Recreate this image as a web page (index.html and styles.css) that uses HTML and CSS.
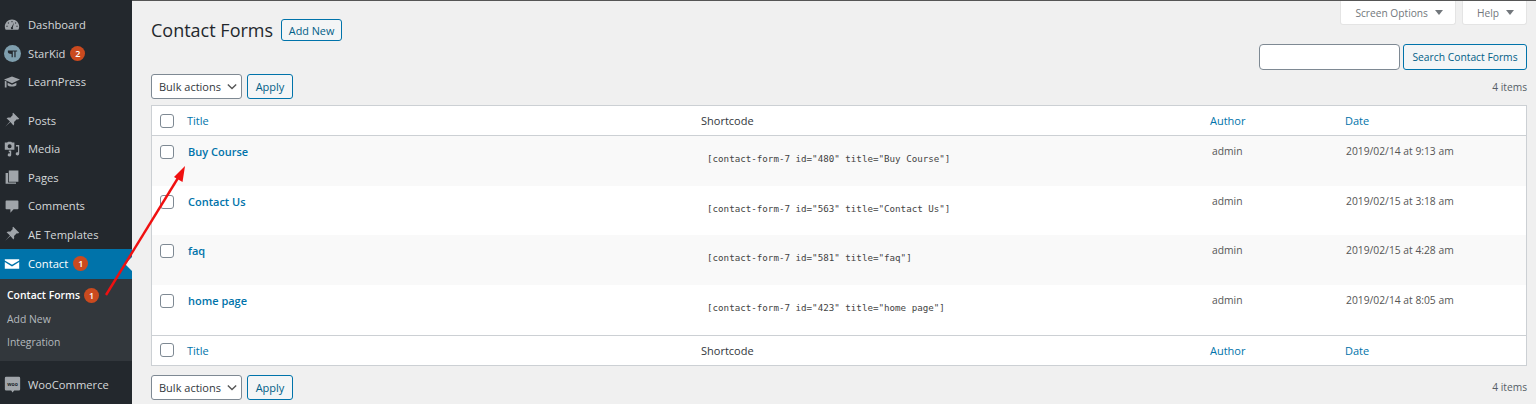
FILE: index.html
```html
<!DOCTYPE html>
<html lang="en">
<head>
  <meta charset="UTF-8">
  <title>Contact Forms</title>
  <link rel="stylesheet" href="styles.css">
</head>
<body>
  <!-- Admin sidebar -->
  <nav class="sidebar">
    <ul class="menu">
      <li class="menu-item">
        <svg class="menu-icon" viewBox="0 0 20 20"><path fill-rule="evenodd" d="M10 3C5 3 1 7 1 12c0 1.600.4 3 1.100 4h15.800c.7-1 1.100-2.400 1.100-4 0-5-4-9-9-9zM5.500 6.500l1 1-1 1-1-1zM9.400 5h1.200v1.500H9.400zM14.500 6.500l1 1-1 1-1-1zM3 11h1.500v1.200H3zM15.500 11H17v1.200h-1.500zM12.500 7l-1.500 6a1.400 1.400 0 1 1-1.400-.4z"/></svg>
        <span>Dashboard</span>
      </li>
      <li class="menu-item">
        <svg class="menu-icon menu-icon-logo" viewBox="0 0 22 22"><circle cx="11" cy="11" r="11" fill="#7f9fae"/><path d="M5 7h12v1.500h-2V16h-1.600V8.500h-2V16H9.800v-4.500C7 11.500 5 10.500 5 9z" fill="#23282d"/></svg>
        <span>StarKid</span>
        <span class="count">2</span>
      </li>
      <li class="menu-item">
        <svg class="menu-icon" viewBox="0 0 20 20"><path d="M10 3L0 7l10 4.500L20 7zM4.500 11v3c1.500 2.300 9.500 2.300 11 0v-3L10 13.500zM1 8.500V17h2.200V9.500z"/></svg>
        <span>LearnPress</span>
      </li>
      <li class="menu-item menu-gap">
        <svg class="menu-icon" viewBox="0 0 20 20"><path d="M11.500 1L19 8.500l-1.500 1-1.500-.5-3.500 3.500c.5 2 .2 3.300-.7 4.500L8 12.500 1.500 18.500 7.500 12 3.200 7.800c1.200-.9 2.500-1.200 4.500-.7L11 3.800l-.5-1.500z"/></svg>
        <span>Posts</span>
      </li>
      <li class="menu-item">
        <svg class="menu-icon" viewBox="0 0 20 20"><path fill-rule="evenodd" d="M1 2h3l1-1h4l1 1h3v9H1zM7 4a2.500 2.500 0 1 0 0 5 2.500 2.500 0 0 0 0-5zM15 5h4v11a2.200 2 0 1 1-1.500-1.900V7H15zM6 12h3v5.500A2.200 2 0 1 1 7.500 15.600V14H6z"/></svg>
        <span>Media</span>
      </li>
      <li class="menu-item">
        <svg class="menu-icon" viewBox="0 0 20 20"><path d="M6 2h12v14H6zM2 5h3v12h10v1.500H2z"/></svg>
        <span>Pages</span>
      </li>
      <li class="menu-item">
        <svg class="menu-icon" viewBox="0 0 20 20"><path d="M3 3h14a1 1 0 0 1 1 1v9a1 1 0 0 1-1 1h-5l-4 4.500V14H3a1 1 0 0 1-1-1V4a1 1 0 0 1 1-1z"/></svg>
        <span>Comments</span>
      </li>
      <li class="menu-item">
        <svg class="menu-icon" viewBox="0 0 20 20"><path d="M11.500 1L19 8.500l-1.500 1-1.500-.5-3.500 3.500c.5 2 .2 3.300-.7 4.500L8 12.500 1.500 18.500 7.500 12 3.200 7.800c1.200-.9 2.500-1.200 4.500-.7L11 3.800l-.5-1.500z"/></svg>
        <span>AE Templates</span>
      </li>
      <li class="menu-item menu-current">
        <svg class="menu-icon" viewBox="0 0 20 20"><path d="M1 4h18v1.500l-9 5.500-9-5.500zM1 7.500l9 5.500 9-5.500V16H1z"/></svg>
        <span>Contact</span>
        <span class="count">1</span>
      </li>
    </ul>
    <ul class="submenu">
      <li class="submenu-item submenu-current">
        <span>Contact Forms</span>
        <span class="count">1</span>
      </li>
      <li class="submenu-item">Add New</li>
      <li class="submenu-item">Integration</li>
    </ul>
    <ul class="menu menu-bottom">
      <li class="menu-item">
        <svg class="menu-icon menu-icon-woo" viewBox="0 0 20 20"><path d="M2.500 1h15A1.500 1.500 0 0 1 19 2.500v13a1.500 1.500 0 0 1-1.500 1.500H12l-2 2.500L8.500 17h-6A1.500 1.500 0 0 1 1 15.500v-13A1.500 1.500 0 0 1 2.500 1z"/><text class="woo-text" x="10" y="11.500">woo</text></svg>
        <span>WooCommerce</span>
      </li>
    </ul>
  </nav>

  <main class="content">
    <div class="top-area">
      <div class="title-row">
        <h1>Contact Forms</h1>
        <button class="btn btn-add">Add New</button>
      </div>
      <div class="top-right">
        <div class="tabs">
          <div class="tab">Screen Options <i class="tab-arrow"></i></div>
          <div class="tab">Help <i class="tab-arrow"></i></div>
        </div>
        <div class="search">
          <input class="search-input" type="text">
          <button class="btn">Search Contact Forms</button>
        </div>
      </div>
    </div>

    <div class="tablenav">
      <div class="select">Bulk actions
        <svg class="chevron" viewBox="0 0 12 8"><path d="M1 1.500l5 5 5-5" fill="none" stroke="#555" stroke-width="1.600"/></svg>
      </div>
      <button class="btn">Apply</button>
      <div class="items">4 items</div>
    </div>

    <table class="forms">
      <thead>
        <tr>
          <th class="col-check"><span class="checkbox"></span></th>
          <th class="col-title"><a>Title</a></th>
          <th class="col-code">Shortcode</th>
          <th class="col-author"><a>Author</a></th>
          <th class="col-date"><a>Date</a></th>
        </tr>
      </thead>
      <tbody>
        <tr class="alt">
          <td class="col-check"><span class="checkbox"></span></td>
          <td class="col-title"><a class="row-title">Buy Course</a></td>
          <td class="col-code"><code>[contact-form-7 id="480" title="Buy Course"]</code></td>
          <td class="col-author">admin</td>
          <td class="col-date">2019/02/14 at 9:13 am</td>
        </tr>
        <tr>
          <td class="col-check"><span class="checkbox"></span></td>
          <td class="col-title"><a class="row-title">Contact Us</a></td>
          <td class="col-code"><code>[contact-form-7 id="563" title="Contact Us"]</code></td>
          <td class="col-author">admin</td>
          <td class="col-date">2019/02/15 at 3:18 am</td>
        </tr>
        <tr class="alt">
          <td class="col-check"><span class="checkbox"></span></td>
          <td class="col-title"><a class="row-title">faq</a></td>
          <td class="col-code"><code>[contact-form-7 id="581" title="faq"]</code></td>
          <td class="col-author">admin</td>
          <td class="col-date">2019/02/15 at 4:28 am</td>
        </tr>
        <tr>
          <td class="col-check"><span class="checkbox"></span></td>
          <td class="col-title"><a class="row-title">home page</a></td>
          <td class="col-code"><code>[contact-form-7 id="423" title="home page"]</code></td>
          <td class="col-author">admin</td>
          <td class="col-date">2019/02/14 at 8:05 am</td>
        </tr>
      </tbody>
      <tfoot>
        <tr>
          <th class="col-check"><span class="checkbox"></span></th>
          <th class="col-title"><a>Title</a></th>
          <th class="col-code">Shortcode</th>
          <th class="col-author"><a>Author</a></th>
          <th class="col-date"><a>Date</a></th>
        </tr>
      </tfoot>
    </table>

    <div class="tablenav tablenav-bottom">
      <div class="select">Bulk actions
        <svg class="chevron" viewBox="0 0 12 8"><path d="M1 1.500l5 5 5-5" fill="none" stroke="#555" stroke-width="1.600"/></svg>
      </div>
      <button class="btn">Apply</button>
      <div class="items">4 items</div>
    </div>
  </main>

  <!-- Red annotation arrow drawn over the screenshot -->
  <svg class="arrow" viewBox="0 0 1536 404">
    <path d="M106 295L178 178" fill="none" stroke="#f01010" stroke-width="2.400"/>
    <path d="M185 166L182.500 182L174 177z" fill="#f01010"/>
  </svg>
</body>
</html>
```

FILE: styles.css
```css
* {
  box-sizing: border-box;
}

html, body {
  margin: 0;
  padding: 0;
  height: 404px;
  overflow: hidden;
}

body {
  display: flex;
  font-family: "Open Sans", sans-serif;
  font-size: 11px;
  color: #444;
  background-color: #f0f0f0;
}

ul {
  list-style: none;
  margin: 0;
  padding: 0;
}

/* sidebar */
.sidebar {
  width: 132px;
  flex-shrink: 0;
  padding-top: 10.500px;
  background-color: #23282d;
  color: #d5d8da;
  font-size: 11.200px;
}

.menu-item {
  display: flex;
  align-items: center;
  height: 28.500px;
  padding-left: 4px;
  gap: 8px;
  white-space: nowrap;
}

.menu-gap {
  margin-top: 10px;
}

.menu-icon {
  width: 16px;
  height: 16px;
  flex-shrink: 0;
  fill: #a0a5aa;
}

.menu-icon-logo {
  width: 17px;
  height: 17px;
  margin-right: -1px;
}

.menu-icon-woo {
  width: 17px;
  height: 17px;
  margin-right: -1px;
}

.woo-text {
  fill: #23282d;
  font-size: 6px;
  font-weight: 700;
  text-anchor: middle;
}

.menu-current {
  height: 30px;
  background-color: #0073aa;
  color: #fff;
  position: relative;
}

.menu-current .menu-icon {
  fill: #fff;
}

.menu-current::after {
  content: "";
  position: absolute;
  right: 0;
  top: 8px;
  border: 7px solid transparent;
  border-right-color: #f0f0f0;
}

.count {
  display: inline-flex;
  align-items: center;
  justify-content: center;
  width: 15px;
  height: 15px;
  margin-left: -3px;
  border-radius: 50%;
  background-color: #ca4a1f;
  color: #fff;
  font-size: 9px;
  font-weight: 600;
}

.submenu {
  height: 82px;
  padding-top: 5px;
  background-color: #32373c;
  color: #b4b9be;
  font-size: 10.400px;
}

.submenu-item {
  display: flex;
  align-items: center;
  height: 23.500px;
  padding-left: 7px;
  gap: 7px;
}

.submenu-current {
  color: #fff;
  font-weight: 600;
}

.menu-bottom {
  padding-top: 10px;
}

/* main column */
.content {
  flex: 1;
  min-width: 0;
  padding: 0 9px 0 19px;
  border-top: 1px solid #555;
}

.top-area {
  display: flex;
  justify-content: space-between;
  height: 69px;
}

.title-row {
  display: flex;
  align-items: center;
  gap: 7px;
  height: 22px;
  margin-top: 18px;
}

h1 {
  margin: 0;
  font-size: 18px;
  font-weight: 400;
  color: #23282d;
}

.btn {
  height: 25px;
  padding: 0 6px;
  border: 1px solid #0073aa;
  border-radius: 3px;
  background-color: #f3f5f6;
  color: #016087;
  font-family: inherit;
  font-size: 10.800px;
}

.btn-add {
  width: 61px;
  height: 22px;
  padding: 0;
  margin-left: 1px;
}

.top-right {
  display: flex;
  flex-direction: column;
  align-items: flex-end;
}

.tabs {
  display: flex;
  gap: 6px;
  height: 24px;
}

.tab {
  display: flex;
  align-items: center;
  gap: 7px;
  padding: 0 12px 0 14px;
  border: 1px solid #e4e4e4;
  border-top: none;
  border-radius: 0 0 3px 3px;
  background-color: #fff;
  color: #72777c;
  font-size: 10.200px;
}

.tab-arrow {
  width: 0;
  height: 0;
  border: 4px solid transparent;
  border-top: 5px solid #72777c;
  border-bottom: none;
}

.search {
  display: flex;
  gap: 3px;
  margin-top: 19px;
}

.search-input {
  width: 141px;
  height: 26px;
  border: 1px solid #7e8993;
  border-radius: 4px;
  background-color: #fff;
}

.search .btn {
  width: 124px;
  height: 26px;
  padding: 0;
  font-size: 10.300px;
}

.tablenav {
  display: flex;
  align-items: center;
  gap: 5px;
  height: 25px;
  margin-top: 4px;
}

.tablenav-bottom {
  margin-top: 9px;
}

.select {
  display: flex;
  align-items: center;
  justify-content: space-between;
  width: 91px;
  height: 25px;
  padding: 0 4px 0 7px;
  border: 1px solid #7e8993;
  border-radius: 3px;
  background-color: #fff;
  color: #32373c;
  font-size: 11px;
}

.chevron {
  width: 10px;
  height: 7px;
}

.tablenav .btn {
  width: 46px;
  padding: 0;
  font-size: 11px;
}

.items {
  margin-left: auto;
  font-size: 10.200px;
  color: #555d66;
}

/* list table */
.forms {
  width: 100%;
  margin-top: 6px;
  table-layout: fixed;
  border-collapse: separate;
  border-spacing: 0;
  border: 1px solid #ccd0d4;
  background-color: #fff;
}

.forms th,
.forms td {
  padding: 0;
  text-align: left;
  font-weight: 400;
  vertical-align: top;
}

.forms th {
  height: 30px;
  vertical-align: middle;
  color: #32373c;
}

.forms thead th {
  border-bottom: 1px solid #ccd0d4;
}

.forms tfoot th {
  border-top: 1px solid #ccd0d4;
}

.forms td {
  height: 49.700px;
  padding-top: 8px;
}

.forms a {
  color: #0073aa;
}

.alt td {
  background-color: #f9f9f9;
}

.forms .col-check {
  width: 35px;
  padding-left: 8px;
}

.col-title {
  width: 514px;
}

.col-code {
  width: 509px;
}

.col-author {
  width: 135px;
}

.forms td.col-title {
  padding-left: 1px;
}

.forms td.col-code {
  padding-left: 6px;
}

.row-title {
  font-weight: 600;
  font-size: 11px;
}

.forms td.col-author,
.forms td.col-date {
  font-size: 10.300px;
  color: #555;
}

.forms td.col-author {
  padding-left: 2px;
}

.forms td.col-date {
  padding-left: 1px;
}

code {
  display: block;
  margin-top: 9px;
  font-family: "DejaVu Sans Mono", monospace;
  font-size: 9.200px;
  color: #444;
}

.checkbox {
  display: block;
  width: 14px;
  height: 14px;
  border: 1px solid #7e8993;
  border-radius: 3px;
  background-color: #fff;
}

.forms td .checkbox {
  margin-top: 1px;
}

.arrow {
  position: absolute;
  left: 0;
  top: 0;
  width: 1536px;
  height: 404px;
  pointer-events: none;
}
```
